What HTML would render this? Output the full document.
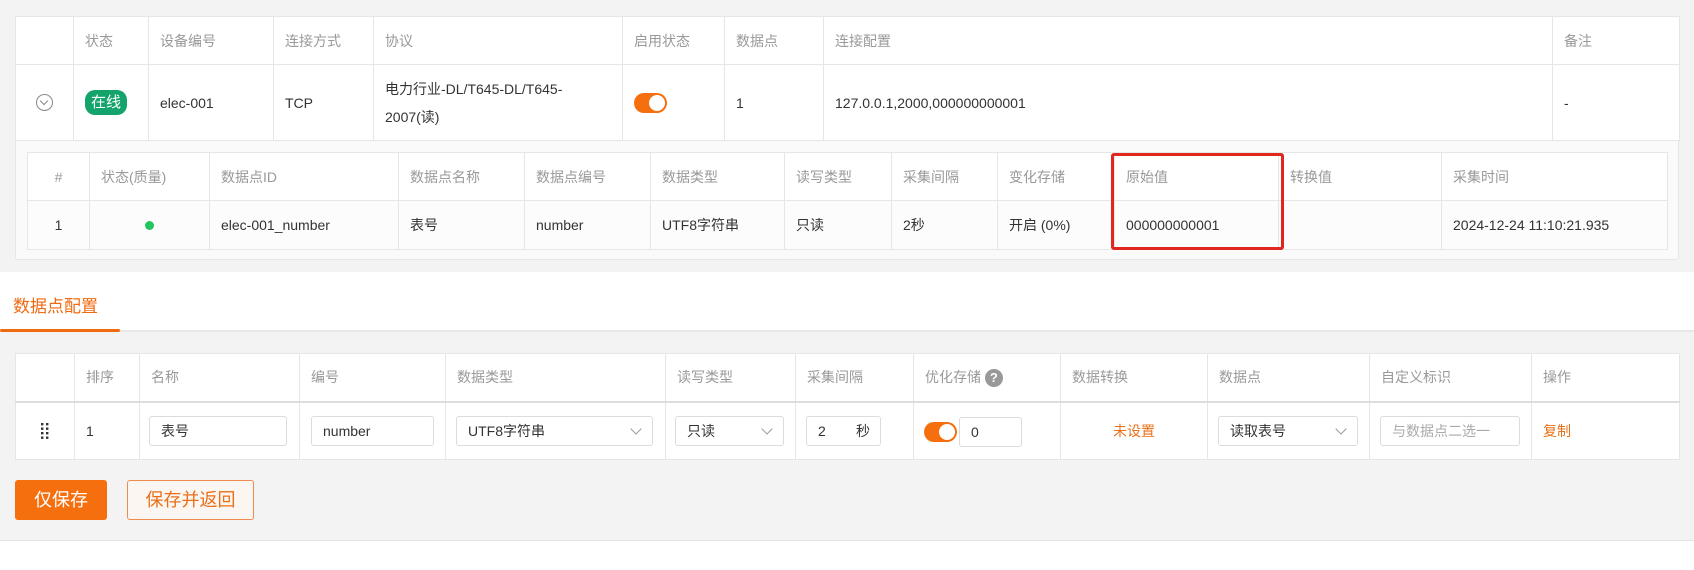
<!DOCTYPE html>
<html><head><meta charset="utf-8"><style>
*{box-sizing:border-box;margin:0;padding:0}
body{width:1694px;height:570px;background:#fff;font-family:"Liberation Sans","Noto Sans CJK SC",sans-serif;font-size:14px;color:#333;position:relative;overflow:hidden}
.gray{position:absolute;left:0;width:1694px;background:#f3f3f3}
table{border-collapse:collapse;table-layout:fixed;position:absolute;background:#fff}
td{border:1px solid #e6e6e6;padding:0 11px;vertical-align:middle;white-space:nowrap;overflow:visible}
.h td{color:#999}
.sw{display:inline-block;width:33px;height:20px;border-radius:10px;background:#f66f0f;position:relative;vertical-align:middle}
.sw:after{content:"";position:absolute;right:2px;top:2px;width:16px;height:16px;border-radius:50%;background:#fff}
.inp{position:absolute;height:30px;border:1px solid #dcdcdc;border-radius:3px;background:#fff;padding:0 11px;line-height:28px;color:#333}
.chev{position:absolute;right:12px;top:8px;width:8px;height:8px;border-right:1px solid #999;border-bottom:1px solid #999;transform:rotate(45deg)}
</style></head><body>
<div class="gray" style="top:0;height:272px"></div>
<div style="position:absolute;left:15px;top:16px;width:1664px;height:244px;border:1px solid #e6e6e6;border-radius:3px;background:#fafafa"></div>
<table style="left:15px;top:16px;width:1664px">
<colgroup><col style="width:58px"><col style="width:75px"><col style="width:125px"><col style="width:100px"><col style="width:249px"><col style="width:102px"><col style="width:99px"><col style="width:729px"><col style="width:127px"></colgroup>
<tr class="h" style="height:48px"><td></td><td>状态</td><td>设备编号</td><td>连接方式</td><td>协议</td><td>启用状态</td><td>数据点</td><td>连接配置</td><td>备注</td></tr>
<tr style="height:76px"><td style="text-align:center"><span style="display:inline-block;width:17px;height:17px;border:1px solid #888;border-radius:50%;position:relative;vertical-align:middle"><span style="position:absolute;left:4px;top:3px;width:6px;height:6px;border-right:1px solid #888;border-bottom:1px solid #888;transform:rotate(45deg)"></span></span></td>
<td><span style="display:inline-block;background:#14a36b;color:#fff;border-radius:10px;padding:0 6px;height:25px;line-height:25px;font-size:15px">在线</span></td>
<td>elec-001</td><td>TCP</td><td style="white-space:normal;line-height:28px">电力行业-DL/T645-DL/T645-2007(读)</td><td><span class="sw"></span></td><td>1</td><td>127.0.0.1,2000,000000000001</td><td>-</td></tr>
</table>
<table style="left:27px;top:152px;width:1640px">
<colgroup><col style="width:62px"><col style="width:120px"><col style="width:189px"><col style="width:126px"><col style="width:126px"><col style="width:134px"><col style="width:107px"><col style="width:106px"><col style="width:117px"><col style="width:164px"><col style="width:163px"><col style="width:226px"></colgroup>
<tr class="h" style="height:48px"><td style="text-align:center">#</td><td>状态(质量)</td><td>数据点ID</td><td>数据点名称</td><td>数据点编号</td><td>数据类型</td><td>读写类型</td><td>采集间隔</td><td>变化存储</td><td>原始值</td><td>转换值</td><td>采集时间</td></tr>
<tr style="height:49px;background:#fcfcfc"><td style="text-align:center">1</td><td style="text-align:center"><span style="display:inline-block;width:9px;height:9px;border-radius:50%;background:#22c55e"></span></td><td>elec-001_number</td><td>表号</td><td>number</td><td>UTF8字符串</td><td>只读</td><td>2秒</td><td>开启 (0%)</td><td>000000000001</td><td></td><td>2024-12-24 11:10:21.935</td></tr>
</table>
<div style="position:absolute;left:1111px;top:153px;width:173px;height:97px;border:3px solid #e0261f;border-radius:3px"></div>

<div style="position:absolute;left:13px;top:292px;color:#f06a10;font-size:17px">数据点配置</div>
<div style="position:absolute;left:0;top:330px;width:1694px;height:2px;background:#e8e8e8"></div>
<div style="position:absolute;left:0;top:329px;width:120px;height:3px;background:#f06a10;border-radius:2px"></div>
<div class="gray" style="top:332px;height:209px;border-bottom:1px solid #e4e4e4"></div>

<table style="left:15px;top:353px;width:1664px">
<colgroup><col style="width:59px"><col style="width:65px"><col style="width:160px"><col style="width:146px"><col style="width:220px"><col style="width:130px"><col style="width:118px"><col style="width:147px"><col style="width:147px"><col style="width:162px"><col style="width:162px"><col style="width:148px"></colgroup>
<tr class="h" style="height:48px;border-bottom:2px solid #ddd"><td></td><td>排序</td><td>名称</td><td>编号</td><td>数据类型</td><td>读写类型</td><td>采集间隔</td><td>优化存储 <span style="display:inline-block;width:18px;height:18px;border-radius:50%;background:#999;color:#fff;text-align:center;line-height:18px;font-size:13px;font-weight:bold;vertical-align:middle">?</span></td><td>数据转换</td><td>数据点</td><td>自定义标识</td><td>操作</td></tr>
<tr style="height:58px"><td style="text-align:center"><svg width="10" height="18" viewBox="0 0 10 18" style="vertical-align:middle"><g fill="#333"><rect x="1" y="1" width="2.4" height="2.4"/><rect x="6" y="1" width="2.4" height="2.4"/><rect x="1" y="5.5" width="2.4" height="2.4"/><rect x="6" y="5.5" width="2.4" height="2.4"/><rect x="1" y="10" width="2.4" height="2.4"/><rect x="6" y="10" width="2.4" height="2.4"/><rect x="1" y="14.5" width="2.4" height="2.4"/><rect x="6" y="14.5" width="2.4" height="2.4"/></g></svg></td><td>1</td><td></td><td></td><td></td><td></td><td></td><td></td><td style="text-align:center;color:#e8701a">未设置</td><td></td><td></td><td style="color:#e8701a">复制</td></tr>
</table>
<div class="inp" style="left:149px;top:416px;width:138px">表号</div>
<div class="inp" style="left:311px;top:416px;width:123px">number</div>
<div class="inp" style="left:456px;top:416px;width:197px">UTF8字符串<span class="chev"></span></div>
<div class="inp" style="left:675px;top:416px;width:109px">只读<span class="chev"></span></div>
<div class="inp" style="left:806px;top:416px;width:75px">2<span style="position:absolute;right:10px">秒</span></div>
<span class="sw" style="position:absolute;left:924px;top:422px"></span>
<div class="inp" style="left:959px;top:417px;width:63px">0</div>
<div class="inp" style="left:1218px;top:416px;width:140px">读取表号<span class="chev"></span></div>
<div class="inp" style="left:1380px;top:416px;width:140px;color:#aaa">与数据点二选一</div>

<div style="position:absolute;left:15px;top:480px;width:92px;height:40px;background:#f66f0f;border-radius:3px;color:#fff;font-size:18px;line-height:40px;text-align:center">仅保存</div>
<div style="position:absolute;left:127px;top:480px;width:127px;height:40px;border:1px solid #ef8a50;background:#fcf6f2;border-radius:3px;color:#e8701a;font-size:18px;line-height:38px;text-align:center">保存并返回</div>
</body></html>
